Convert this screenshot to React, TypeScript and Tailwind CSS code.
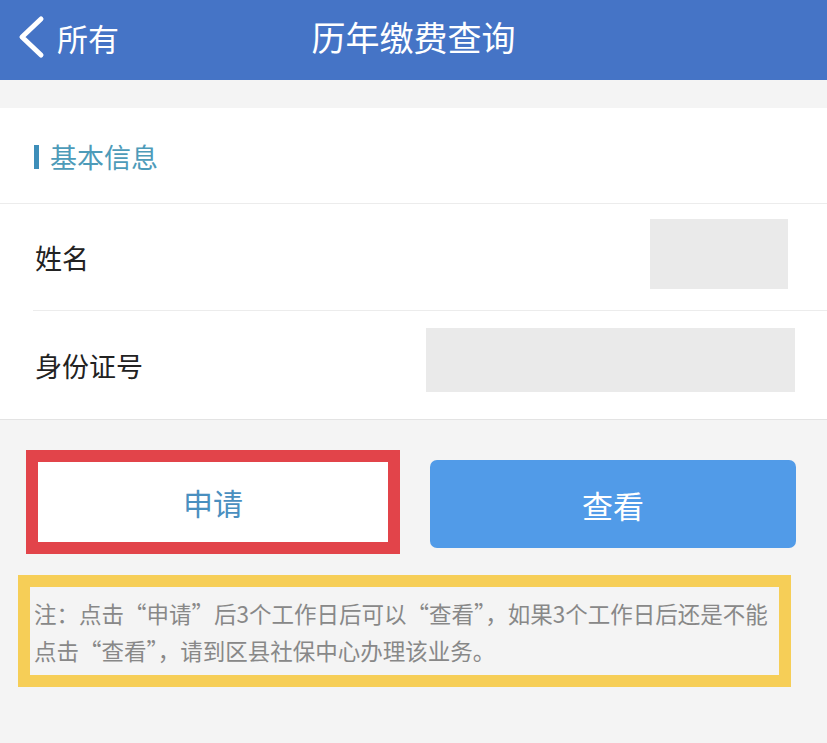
import React from "react";

const rows = [
  { id: 1, label: "姓名", box: "w-[138px] h-[70px] mr-[39px]", h: "h-[107px]" },
  { id: 2, label: "身份证号", box: "w-[369px] h-[64px] mr-[32px]", h: "h-[108px]" },
];

const BackIcon: React.FC = () => (
  <svg width="28" height="44" viewBox="0 0 28 44" fill="none">
    <path
      d="M24 4 L5 22 L24 40"
      stroke="#ffffff"
      strokeWidth="5"
      strokeLinecap="round"
      strokeLinejoin="round"
    />
  </svg>
);

const App: React.FC = () => {
  return (
    <div className="w-[827px] h-[743px] bg-[#f4f4f4] font-['Noto_Sans_CJK_SC',sans-serif] overflow-hidden">
      {/* 顶部导航 */}
      <div className="h-[80px] bg-[#4574c6] grid grid-cols-[1fr_auto_1fr] items-center pb-[6px] text-white">
        <div className="flex items-center pl-[17px] gap-[12px]">
          <BackIcon />
          <span className="text-[31px] leading-none">所有</span>
        </div>
        <div className="text-[34px] leading-none">历年缴费查询</div>
        <div />
      </div>

      {/* 基本信息 */}
      <div className="mt-[28px] bg-white border-b border-[#e3e3e3]">
        <div className="h-[96px] flex items-center pl-[34px] pt-[2px] border-b border-[#ececec]">
          <span className="w-[5px] h-[24px] bg-[#3d8eb9] mr-[11px]" />
          <span className="text-[27px] leading-none text-[#4d9bb9]">基本信息</span>
        </div>
        <div className="ml-[33px]">
          {rows.map((row, i) => (
            <div
              key={row.id}
              className={`${row.h} flex items-center justify-between ${i === 0 ? "border-b border-[#ececec]" : ""}`}
            >
              <span className="pl-[2px] text-[27px] leading-none text-[#222222]">{row.label}</span>
              <div className={`${row.box} bg-[#eaeaea] ${i === 0 ? "-mt-[6px]" : "-mt-[10px]"}`} />
            </div>
          ))}
        </div>
      </div>

      {/* 按钮 */}
      <div className="mt-[30px] flex items-center pl-[26px] gap-[30px]">
        <div className="w-[374px] h-[104px] border-[12px] border-[#e2444a] bg-white flex items-center justify-center">
          <span className="text-[30px] leading-none text-[#4a8fbf]">申请</span>
        </div>
        <div className="w-[366px] h-[88px] mt-[4px] rounded-[7px] bg-[#519be8] flex items-center justify-center">
          <span className="text-[31px] leading-none text-white">查看</span>
        </div>
      </div>

      {/* 提示 */}
      <div className="mt-[21px] ml-[18px] w-[773px] h-[112px] border-[12px] border-[#f6ce57] bg-[#f4f4f4] pl-[4px] pt-[8px]">
        <p className="text-[22.5px] leading-[37px] text-[#888888] whitespace-nowrap">
          注：点击“申请”后3个工作日后可以“查看”，如果3个工作日后还是不能
          <br />
          点击“查看”，请到区县社保中心办理该业务。
        </p>
      </div>
    </div>
  );
};

export default App;
